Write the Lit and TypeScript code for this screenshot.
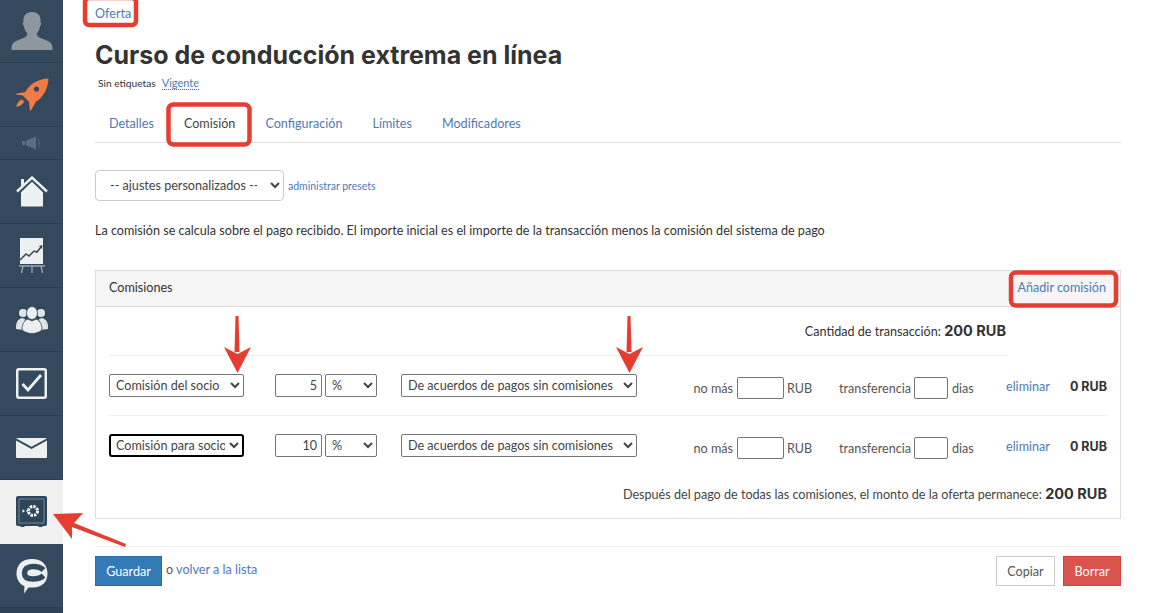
import { LitElement, html, css, svg } from "lit";
import { customElement } from "lit/decorators.js";

const ICON = "#ecf0f1";

const icons = {
  avatar: svg`<svg width="42" height="41" viewBox="0 0 44 42"><path fill="#8e969e" d="M0.500 40.500V38c0-4 2-6 6-7.500l7-3c2.500-1 3.500-2.500 3.500-4.500-2-2-3-5-3.500-8C12 14 12 11.500 13 11.500 12.500 4 16 .500 22 .500S31.500 4 31 11.500c1 0 1 2.500-.5 3.500-.5 3-1.500 6-3.500 8 0 2 1 3.500 3.500 4.500l7 3c4 1.500 6 3.500 6 7.500v2.500z"/></svg>`,
  rocket: svg`<svg width="34" height="34" viewBox="0 0 34 34"><path fill="#f47c44" d="M33.500.500C25 1 18 4 13 10c-1 1.300-2 2.700-2.700 4L2 15.500c-.8.200-1 .9-.5 1.300l6 .5 6.500 6.500.8 8.500c.3.700 1 .6 1.300-.1L21 23.500c1.500-.8 3-1.800 4.200-3C30.500 15 33 8 33.500.500z"/><circle cx="21.500" cy="11" r="2.600" fill="#34495e"/><path fill="#f47c44" d="M7 21.500c-2.500.6-5 3.500-5.800 7.500 3.800-.7 6.800-2.700 8-5.300z"/></svg>`,
  speaker: svg`<svg width="20" height="14" viewBox="0 0 20 14"><path fill="#566c87" d="M0 5h3v4H0zM4 4.500 14 .500v13L4 9.500z"/><path fill="none" stroke="#566c87" d="M16 2.500c1.500 2.500 1.500 6.500 0 9"/></svg>`,
  home: svg`<svg width="32" height="31" viewBox="0 0 32 31"><path fill="none" stroke="${ICON}" stroke-width="2.400" d="M1 15.500 16 1.500l15 14"/><path fill="${ICON}" d="M5 16.200 16 5.800l11 10.400V30.500H5zM5 3h3v5.500L5 11z"/></svg>`,
  chart: svg`<svg width="26" height="36" viewBox="0 0 26 36"><path fill="${ICON}" d="M1 0h23v26H1z"/><path fill="none" stroke="#34495e" stroke-width="1.500" d="M1 22l6-6 3 2 5-5 3 1 4-5"/><path fill="#34495e" d="M23.500 7l-.5 4-3-3z"/><path fill="none" stroke="#9aa6b2" stroke-width="1.300" d="M0 28h26M4 28l-1.500 7M13 28v7M22 28l1.500 7"/></svg>`,
  people: svg`<svg width="32" height="28" viewBox="0 0 32 28"><g fill="#dfe4e7"><circle cx="7" cy="7" r="4"/><circle cx="25" cy="7" r="4"/><path d="M0 21c0-5 2-8 6-9l3 1-2 11-7-1zM32 21c0-5-2-8-6-9l-3 1 2 11 7-1z"/></g><g fill="${ICON}" stroke="#34495e" stroke-width=".8"><ellipse cx="16" cy="7" rx="5.500" ry="6.500"/><path d="M6 24c0-7 3-10 6-11l4 2 4-2c3 1 6 4 6 11-3 2.500-7 3.500-10 3.500S9 26.500 6 24z"/></g></svg>`,
  check: svg`<svg width="31" height="31" viewBox="0 0 31 31"><rect x="1.250" y="1.250" width="28.500" height="28.500" rx="1.500" fill="none" stroke="${ICON}" stroke-width="2.500"/><path fill="none" stroke="${ICON}" stroke-width="2.800" d="M6.500 16l5.500 6L25 7"/></svg>`,
  mail: svg`<svg width="31" height="20" viewBox="0 0 31 20"><path fill="${ICON}" d="M0 2.500 15.500 11 31 2.500V19a1 1 0 0 1-1 1H1a1 1 0 0 1-1-1zM1 0h29l.7.6L15.500 8.800.3.600z"/></svg>`,
  safe: svg`<svg width="31" height="31" viewBox="0 0 31 31"><path fill="#2f4559" d="M2 0h27a2 2 0 0 1 2 2v26a2 2 0 0 1-2 2h-2l-1 1h-3l-1-1H9l-1 1H5l-1-1H2a2 2 0 0 1-2-2V2a2 2 0 0 1 2-2z"/><rect x="3" y="3" width="25" height="24" fill="none" stroke="#8a99a8" stroke-width=".8"/><circle cx="17" cy="15" r="4.500" fill="none" stroke="#fff" stroke-width="3" stroke-dasharray="2.400 1.100"/><path fill="#fff" d="M6.500 13.300 9 15l-2.500 1.700zM10.300 14.300h1.500v1.400h-1.500z"/></svg>`,
  chat: svg`<svg width="32" height="36" viewBox="0 0 32 36"><path fill="${ICON}" d="M16 1c10 0 15.500 6 15.500 14.500S26 29.500 17 29.500c-2 0-3 0-4.500 0L8 35.500l.5-7.200C3.500 26 .500 21.500 .500 15.500.500 7 6 1 16 1z"/><path fill="none" stroke="#34495e" stroke-width="5.500" d="M27.500 12C25 9.500 22 8.500 17 8.500 11 8.500 8.500 11.500 8.500 15c0 3.500 2.500 6 8.500 6 5 0 8-1 10.500-3.500"/></svg>`,
};

@customElement("app-root")
export class AppRoot extends LitElement {
  static styles = css`
    :host {
      display: block;
      position: relative;
      height: 613px;
      overflow: hidden;
      font-family: "Lato", "Liberation Sans", sans-serif;
      font-size: 12.6px;
      color: #333;
      background: #fff;
    }
    .shell { display: flex; height: 613px; }
    .side {
      width: 63px;
      flex: none;
      background: #2f4255;
      display: flex;
      flex-direction: column;
    }
    .item {
      box-sizing: border-box;
      height: 64px;
      flex: none;
      background: #34495e;
      border-bottom: 1px solid #2b3e50;
      display: flex;
      align-items: center;
      justify-content: center;
    }
    .item.top { height: 63px; }
    .item.small { height: 33px; }
    .item.active { background: #f0f0f0; border-bottom-color: #f0f0f0; }
    .main { flex: 1; min-width: 0; padding: 0 32px; }
    a { color: #4f7ab5; text-decoration: none; }
    .crumb { height: 26px; line-height: 27px; }
    h1 {
      margin: 16px 0 0;
      font-family: "Inter", "Lato", sans-serif;
      font-size: 25px;
      line-height: 27px;
      font-weight: 700;
      color: #333;
    }
    .tags { display: flex; gap: 6px; margin: 6px 0 0 3px; font-size: 10.2px; line-height: 16px; align-items: center; }
    .tags a { border-bottom: 1px dotted #337ab7; font-size: 11px; line-height: 13px; }
    .tabs { display: flex; margin-top: 13px; height: 39px; box-sizing: border-box; border-bottom: 1px solid #ddd; }
    .tabs a { padding: 0 15px; line-height: 40px; }
    .tabs a:first-child { padding-left: 14px; }
    .tabs a.on { color: #444; }
    .preset { display: flex; align-items: center; gap: 4px; margin-top: 27px; }
    select, input {
      font-family: inherit;
      font-size: 12.6px;
      color: #444;
      box-sizing: border-box;
      background: #fff;
    }
    .preset select {
      width: 189px;
      height: 31px;
      padding: 0 10px;
      border: 1px solid #ccc;
      border-radius: 4px;
    }
    .preset a { font-size: 10.5px; }
    .note { margin: 21px 0 0; line-height: 18px; color: #333; }
    .panel { margin-top: 30px; border: 1px solid #ddd; height: 249px; box-sizing: border-box; }
    .head {
      box-sizing: border-box;
      height: 36px;
      background: #f5f5f5;
      border-bottom: 1px solid #ddd;
      display: flex;
      align-items: center;
      justify-content: space-between;
      padding: 0 14px 2px 13px;
    }
    .body { padding: 0 13px; }
    .total { box-sizing: border-box; width: 897px; height: 49px; padding-bottom: 2px; border-bottom: 1px solid #eee; display: flex; align-items: center; justify-content: flex-end; }
    b { font-family: "Inter", "Lato", sans-serif; font-weight: 700; font-size: 14.500px; color: #333; }
    .row {
      box-sizing: border-box;
      height: 60px;
      border-bottom: 1px solid #eee;
      display: flex;
      align-items: center;
      color: #555;
    }
    .row.last { border-bottom-color: transparent; }
    .row select, .row input { height: 23px; border: 1px solid #767676; border-radius: 2px; padding: 0 2px; flex: none; }
    .row select.first { width: 135px; }
    .row select.focus { border: 2px solid #000; border-radius: 3px; padding: 0 1px; }
    .row input.num { width: 47px; margin-left: 31px; text-align: right; padding-right: 4px; }
    .row select.pct { width: 52px; margin-left: 3px; }
    .row select.wide { width: 236px; margin-left: 24px; }
    .row input.lim { width: 47px; height: 22px; margin-left: 4px; margin-top: 4px; }
    .row input.days { width: 34px; height: 22px; margin-left: 3px; margin-top: 4px; }
    .nomas { width: 43px; margin-left: 53px; margin-top: 6px; text-align: right; flex: none; }
    .rub { width: 25px; margin-left: 3px; margin-top: 6px; flex: none; }
    .trans { width: 72px; margin-left: 27px; margin-top: 6px; text-align: right; flex: none; }
    .dias { width: 22px; margin-left: 4px; margin-top: 6px; flex: none; }
    .del { margin-left: 32px; margin-top: 2px; }
    .row b { margin-left: auto; margin-top: 2px; font-size: 12.500px; }
    .sum { height: 36px; padding-bottom: 2px; box-sizing: border-box; display: flex; align-items: center; justify-content: flex-end; color: #444; }
    .foot {
      margin-top: 27px;
      border-top: 1px solid #eee;
      padding-top: 9px;
      display: flex;
      align-items: center;
      gap: 4px;
    }
    .btn {
      box-sizing: border-box;
      height: 30px;
      border: 1px solid transparent;
      font: inherit;
    }
    .primary { width: 67px; background: #337ab7; border-color: #2e6da4; color: #fff; }
    .ghost { width: 59px; background: #fff; border-color: #ccc; color: #555; margin-left: auto; }
    .danger { width: 58px; background: #d9534f; border-color: #d43f3a; color: #fff; margin-left: 4px; }
    .alt { margin-top: -3px; color: #555; }
    .marks { position: absolute; inset: 0; pointer-events: none; }
  `;

  private row(first: string, val: string, focus: boolean, last: boolean) {
    return html`<div class="row ${last ? "last" : ""}">
      <select class="first ${focus ? "focus" : ""}"><option>${first}</option></select>
      <input class="num" .value=${val} />
      <select class="pct"><option>%</option></select>
      <select class="wide"><option>De acuerdos de pagos sin comisiones</option></select>
      <span class="nomas">no más</span>
      <input class="lim" />
      <span class="rub">RUB</span>
      <span class="trans">transferencia</span>
      <input class="days" />
      <span class="dias">dias</span>
      <a class="del">eliminar</a>
      <b>0 RUB</b>
    </div>`;
  }

  render() {
    return html`<div class="shell">
        <nav class="side">
          <div class="item top">${icons.avatar}</div>
          <div class="item">${icons.rocket}</div>
          <div class="item small">${icons.speaker}</div>
          <div class="item">${icons.home}</div>
          <div class="item">${icons.chart}</div>
          <div class="item">${icons.people}</div>
          <div class="item">${icons.check}</div>
          <div class="item">${icons.mail}</div>
          <div class="item active">${icons.safe}</div>
          <div class="item">${icons.chat}</div>
        </nav>
        <main class="main">
          <div class="crumb"><a>Oferta</a></div>
          <h1>Curso de conducción extrema en línea</h1>
          <div class="tags"><span>Sin etiquetas</span><a>Vigente</a></div>
          <div class="tabs">
            <a>Detalles</a><a class="on">Comisión</a><a>Configuración</a><a>Límites</a><a>Modificadores</a>
          </div>
          <div class="preset">
            <select><option>-- ajustes personalizados --</option></select>
            <a>administrar presets</a>
          </div>
          <p class="note">La comisión se calcula sobre el pago recibido. El importe inicial es el importe de la transacción menos la comisión del sistema de pago</p>
          <section class="panel">
            <div class="head"><span>Comisiones</span><a>Añadir comisión</a></div>
            <div class="body">
              <div class="total"><span>Cantidad de transacción: <b>200 RUB</b></span></div>
              ${this.row("Comisión del socio", "5", false, false)}
              ${this.row("Comisión para socios", "10", true, true)}
              <div class="sum"><span>Después del pago de todas las comisiones, el monto de la oferta permanece: <b>200 RUB</b></span></div>
            </div>
          </section>
          <div class="foot">
            <button class="btn primary">Guardar</button>
            <span class="alt">o <a>volver a la lista</a></span>
            <button class="btn ghost">Copiar</button>
            <button class="btn danger">Borrar</button>
          </div>
        </main>
      </div>
      <svg class="marks" width="1153" height="613" viewBox="0 0 1153 613">
        <g fill="none" stroke="#e73c30" stroke-width="4.500">
          <rect x="85" y="-2" width="51" height="27" rx="4" />
          <rect x="168.500" y="104.500" width="81" height="40" rx="5" />
          <rect x="1011" y="272.500" width="105" height="33" rx="5" />
        </g>
        <g fill="#e73c30">
          <path d="M235.500 316h3l1 36h-5zM224 347l13.500 7 13.500-7-13.500 26z" />
          <path d="M627.500 316h3l1 36h-5zM616 347l13.500 7 13.500-7-13.500 26z" />
          <path d="M53 514 83 513 74 523 126 544 125 547 72 527 72 539z" />
        </g>
      </svg>`;
  }
}
